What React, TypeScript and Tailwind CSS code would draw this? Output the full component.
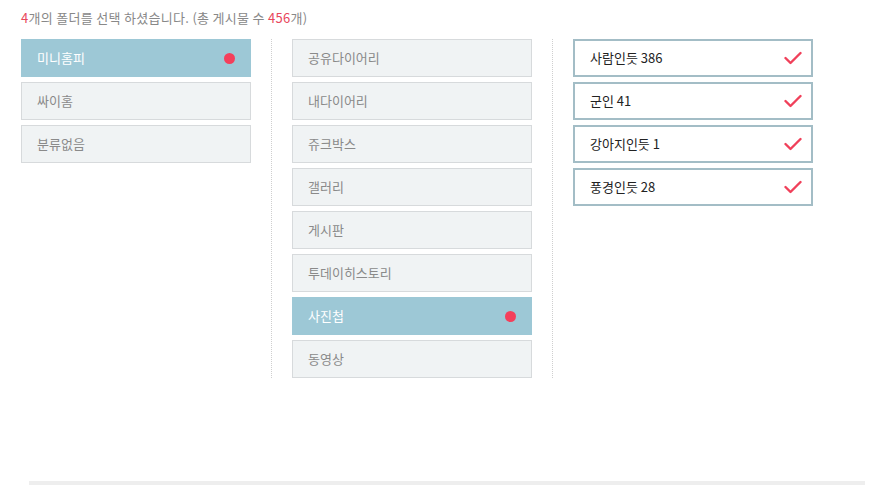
import React from 'react';

const font = { fontFamily: '"Noto Sans CJK KR", "Noto Sans", sans-serif' };

const col1 = [
  { name: '미니홈피', on: true },
  { name: '싸이홈', on: false },
  { name: '분류없음', on: false },
];

const col2 = [
  { name: '공유다이어리', on: false },
  { name: '내다이어리', on: false },
  { name: '쥬크박스', on: false },
  { name: '갤러리', on: false },
  { name: '게시판', on: false },
  { name: '투데이히스토리', on: false },
  { name: '사진첩', on: true },
  { name: '동영상', on: false },
];

const col3 = ['사람인듯 386', '군인 41', '강아지인듯 1', '풍경인듯 28'];

function FolderItem({ name, on, width }: { name: string; on: boolean; width: string }) {
  return (
    <li
      className={
        'flex h-[38px] items-center justify-between border pl-[15px] pr-[15px] text-[13px] ' +
        width +
        (on
          ? ' border-[#9dc8d6] bg-[#9dc8d6] text-white'
          : ' border-[#d7dadc] bg-[#f0f3f4] text-[#8a8a8a]')
      }
    >
      <span>{name}</span>
      {on && <span className="h-[11px] w-[11px] rounded-full bg-[#f43f5b]" />}
    </li>
  );
}

function Check() {
  return (
    <svg width="18" height="14" viewBox="0 0 18 14" fill="none">
      <path d="M1.5 7 L6.5 12 L16.5 2" stroke="#f0405a" strokeWidth="2.4" strokeLinecap="round" strokeLinejoin="round" />
    </svg>
  );
}

export default function App() {
  return (
    <div className="h-[488px] w-[893px] bg-white" style={font}>
      <div className="pl-[21px] pt-[9px]">
        <p className="text-[13px] leading-[18px] tracking-[0.3px] text-[#888]">
          <span className="text-[#e8475c]">4</span>개의 폴더를 선택 하셨습니다. (총 게시물 수{' '}
          <span className="text-[#e8475c]">456</span>개)
        </p>

        <div className="mt-[12px] flex items-start">
          <ul className="flex w-[230px] flex-col gap-[5px]">
            {col1.map((f) => (
              <FolderItem key={f.name} name={f.name} on={f.on} width="w-[230px]" />
            ))}
          </ul>

          <div className="mx-[20px] self-stretch border-l border-dotted border-[#cfcfcf]" />

          <ul className="flex w-[240px] flex-col gap-[5px]">
            {col2.map((f) => (
              <FolderItem key={f.name} name={f.name} on={f.on} width="w-[240px]" />
            ))}
          </ul>

          <div className="mx-[20px] self-stretch border-l border-dotted border-[#cfcfcf]" />

          <ul className="flex w-[240px] flex-col gap-[5px]">
            {col3.map((name) => (
              <li
                key={name}
                className="flex h-[38px] items-center justify-between border-2 border-[#a3bdc6] bg-white pl-[15px] pr-[9px] text-[13px] text-[#222]"
              >
                <span>{name}</span>
                <Check />
              </li>
            ))}
          </ul>
        </div>
      </div>

      <div className="ml-[29px] mt-[103px] h-[4px] w-[836px] bg-[#eeeeee]" />
    </div>
  );
}
